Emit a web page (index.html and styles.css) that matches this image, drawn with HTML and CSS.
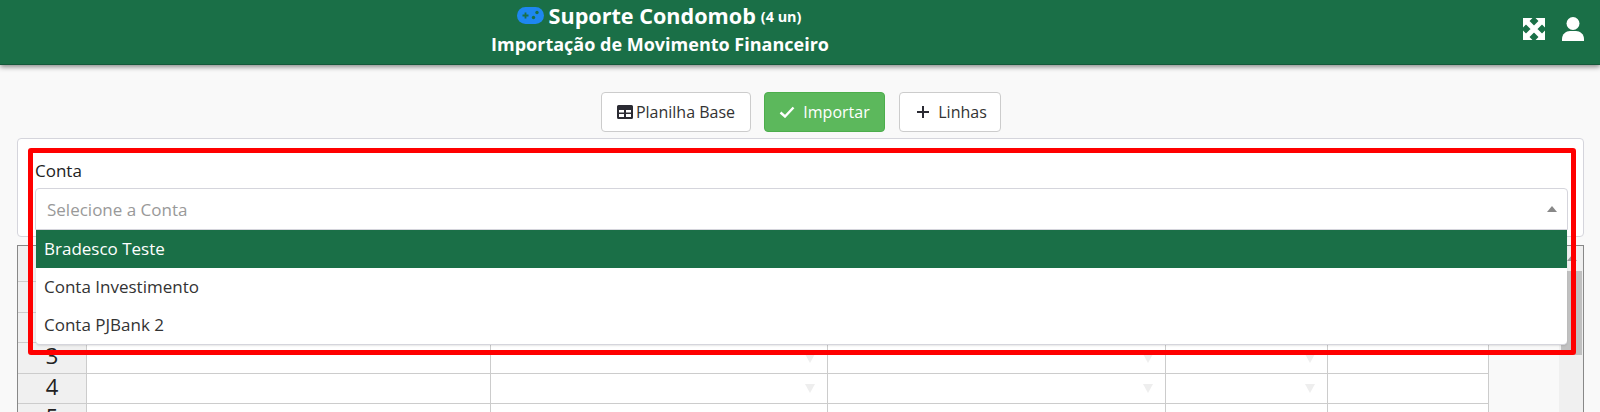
FILE: index.html
```html
<!DOCTYPE html>
<html lang="pt-BR">
<head>
    <meta charset="UTF-8">
    <title>Importação de Movimento Financeiro</title>
    <link rel="stylesheet" href="styles.css">
</head>
<body>
    <div class="header">
        <div class="header-title">
            <div class="title-line">
                <svg class="icon-gamepad" viewBox="0 0 27 17">
                    <rect width="27" height="17" rx="8.500" fill="#1e87f0"/>
                    <path d="M5.500 8.500h6M8.500 5.500v6" stroke="#1a6f47" stroke-width="1.800"/>
                    <circle cx="20" cy="5.500" r="1.700" fill="#1a6f47"/>
                    <circle cx="16.500" cy="10.500" r="1.700" fill="#1a6f47"/>
                </svg>
                <span class="title-main">Suporte Condomob</span>
                <span class="title-count">(4 un)</span>
            </div>
            <div class="subtitle">Importação de Movimento Financeiro</div>
        </div>
        <div class="header-icons">
            <svg class="icon-expand" viewBox="0 0 22 22">
                <path fill="#fff" d="M0 0h9.500L0 9.500zM22 0v9.500L12.500 0zM22 22h-9.500L22 12.500zM0 22v-9.500L9.500 22z"/>
                <path d="M3 3l16 16M19 3L3 19" stroke="#fff" stroke-width="5"/>
            </svg>
            <svg class="icon-user" viewBox="0 0 22 24">
                <circle cx="11" cy="6.500" r="6.500" fill="#fff"/>
                <path fill="#fff" d="M0 24v-2c0-5 4-8 8-8h6c4 0 8 3 8 8v2z"/>
            </svg>
        </div>
    </div>

    <div class="toolbar">
        <button class="btn btn-base">
            <svg class="icon-table" viewBox="0 0 16 14">
                <path fill="#2b2b33" d="M1.500 0h13A1.500 1.500 0 0 1 16 1.500v11a1.500 1.500 0 0 1-1.500 1.500h-13A1.500 1.500 0 0 1 0 12.500v-11A1.500 1.500 0 0 1 1.500 0zM2 5v2.500h5V5zm7 0v2.500h5V5zM2 9v3h5V9zm7 0v3h5V9z"/>
            </svg>Planilha Base
        </button>
        <button class="btn btn-import">
            <svg class="icon-check" viewBox="0 0 16 12">
                <path d="M1.500 6.500l4.500 4 8.500-9" fill="none" stroke="#fff" stroke-width="2.400"/>
            </svg>Importar
        </button>
        <button class="btn btn-lines">
            <svg class="icon-plus" viewBox="0 0 14 14">
                <path d="M7 1v12M1 7h12" stroke="#2b2b33" stroke-width="2"/>
            </svg>Linhas
        </button>
    </div>

    <div class="panel">
        <label class="field-label">Conta</label>
        <div class="select">
            <div class="select-box">
                <span class="select-placeholder">Selecione a Conta</span>
                <span class="select-arrow"></span>
            </div>
            <ul class="select-options">
                <li class="option option-active">Bradesco Teste</li>
                <li class="option">Conta Investimento</li>
                <li class="option">Conta PJBank 2</li>
            </ul>
        </div>
    </div>

    <div class="sheet">
        <div class="sheet-grid">
            <div class="sheet-row sheet-row-head">
                <div class="cell cell-num"></div><div class="cell"></div><div class="cell"></div><div class="cell"></div><div class="cell"></div><div class="cell"></div>
            </div>
            <!-- as linhas 1 e 2 ficam embaixo da lista aberta -->
            <div class="sheet-row">
                <div class="cell cell-num"></div><div class="cell"></div><div class="cell cell-drop"></div><div class="cell cell-drop"></div><div class="cell cell-drop"></div><div class="cell"></div>
            </div>
            <div class="sheet-row">
                <div class="cell cell-num"></div><div class="cell"></div><div class="cell cell-drop"></div><div class="cell cell-drop"></div><div class="cell cell-drop"></div><div class="cell"></div>
            </div>
            <div class="sheet-row">
                <div class="cell cell-num">3</div><div class="cell"></div><div class="cell cell-drop"></div><div class="cell cell-drop"></div><div class="cell cell-drop"></div><div class="cell"></div>
            </div>
            <div class="sheet-row">
                <div class="cell cell-num">4</div><div class="cell"></div><div class="cell cell-drop"></div><div class="cell cell-drop"></div><div class="cell cell-drop"></div><div class="cell"></div>
            </div>
            <div class="sheet-row">
                <div class="cell cell-num">5</div><div class="cell"></div><div class="cell cell-drop"></div><div class="cell cell-drop"></div><div class="cell cell-drop"></div><div class="cell"></div>
            </div>
        </div>
        <div class="sheet-scroll">
            <span class="scroll-up"></span>
            <div class="scroll-thumb"></div>
        </div>
    </div>

    <!-- destaque vermelho por cima do campo -->
    <div class="highlight"></div>
</body>
</html>
```

FILE: styles.css
```css
* {
    box-sizing: border-box;
}

html, body {
    height: 412px;
    overflow: hidden;
}

body {
    margin: 0;
    position: relative;
    font-family: 'Open Sans', sans-serif;
    font-size: 16px;
    color: #333;
    background-color: #f9f9f9;
}

.header {
    height: 65px;
    display: flex;
    justify-content: center;
    position: relative;
    background-color: #1a6f47;
    border-bottom: 1px solid #14583a;
    box-shadow: 0 2px 5px rgba(0, 0, 0, 0.45);
    color: white;
}

.header-title {
    flex: 1;
    padding: 1px 280px 0 0;
    text-align: center;
}

.title-line {
    height: 28px;
    display: flex;
    justify-content: center;
    align-items: center;
    gap: 5px;
    padding-right: 2px;
}

.icon-gamepad {
    width: 27px;
    height: 17px;
}

.title-main {
    font-size: 21.600px;
    font-weight: 700;
}

.title-count {
    font-size: 14.400px;
    font-weight: 700;
    margin-top: 3px;
}

.subtitle {
    margin-top: 1px;
    font-size: 18px;
    font-weight: 700;
    line-height: 28px;
}

.header-icons {
    position: absolute;
    top: 17px;
    right: 16px;
    display: flex;
    align-items: center;
    gap: 17px;
}

.icon-expand {
    width: 22px;
    height: 22px;
}

.icon-user {
    width: 22px;
    height: 24px;
}

.toolbar {
    display: flex;
    justify-content: center;
    gap: 13px;
    padding: 27px 0 6px 2px;
}

.btn {
    height: 40px;
    display: flex;
    align-items: center;
    justify-content: center;
    border: 1px solid #ccc;
    border-radius: 4px;
    background-color: white;
    color: #333;
    font-family: inherit;
    font-size: 16px;
}

.btn-base {
    width: 150px;
}

.btn-import {
    width: 121px;
    gap: 8px;
    margin-right: 1px;
    background-color: #5cb85c;
    border-color: #4cae4c;
    color: white;
}

.btn-lines {
    width: 102px;
    gap: 8px;
    padding-left: 9px;
}

.icon-table {
    width: 16px;
    height: 14px;
    margin-right: 3px;
}

.icon-check {
    width: 16px;
    height: 12px;
}

.icon-plus {
    width: 14px;
    height: 14px;
}

.panel {
    height: 99px;
    margin: 0 16px 0 17px;
    padding: 20px 15px 0 17px;
    background-color: white;
    border: 1px solid #d5d5dc;
    border-radius: 4px;
    font-size: 17px;
}

.field-label {
    display: block;
    height: 29px;
    line-height: 24px;
    color: #222;
}

.select {
    position: relative;
}

.select-box {
    height: 42px;
    display: flex;
    align-items: center;
    justify-content: space-between;
    padding: 0 10px 0 11px;
    background-color: white;
    border: 1px solid #d5d5dc;
    border-radius: 4px 4px 0 0;
}

.select-placeholder {
    color: #999;
}

.select-arrow {
    width: 0;
    height: 0;
    border-left: 5px solid transparent;
    border-right: 5px solid transparent;
    border-bottom: 6px solid #888;
}

.select-options {
    position: absolute;
    top: 42px;
    left: 1px;
    right: 1px;
    z-index: 5;
    margin: 0;
    padding: 0;
    list-style: none;
    background-color: white;
    border-bottom: 1px solid #d5d5dc;
    border-radius: 0 0 4px 4px;
    box-shadow: 0 1px 2px rgba(0, 0, 0, 0.1);
}

.option {
    height: 38px;
    padding-left: 8px;
    line-height: 38px;
}

.option-active {
    background-color: #1a6f47;
    color: white;
}

.sheet {
    height: 200px;
    display: flex;
    margin: 8px 16px 0 17px;
    border: 1px solid #888;
    border-bottom: none;
    background-color: #f9f9f9;
}

.sheet-grid {
    width: 1471px;
}

.sheet-row {
    height: 30.500px;
    display: grid;
    grid-template-columns: 69px 404px 337px 338px 162px 161px;
}

.sheet-row-head {
    height: 36px;
}

.cell {
    position: relative;
    overflow: hidden;
    background-color: white;
    border-right: 1px solid #ccc;
    border-bottom: 1px solid #ccc;
}

.cell-num {
    background-color: #f0f0f0;
    color: #222;
    font-size: 22px;
    line-height: 24px;
    text-align: center;
}

.cell-drop::after {
    content: "";
    position: absolute;
    top: 10.500px;
    right: 12px;
    border-left: 5px solid transparent;
    border-right: 5px solid transparent;
    border-top: 9px solid #eee;
}

.sheet-scroll {
    position: relative;
    flex: 1;
    margin-left: 70px;
    background-color: #f0f0f0;
}

.scroll-up {
    position: absolute;
    top: 9px;
    left: 8px;
    border-left: 5px solid transparent;
    border-right: 5px solid transparent;
    border-bottom: 6px solid #999;
}

.scroll-thumb {
    height: 84px;
    margin: 25px 1px 0 2px;
    background-color: #c1c1c1;
}

.highlight {
    position: absolute;
    top: 148px;
    left: 28px;
    width: 1548px;
    height: 207px;
    z-index: 10;
    border: 5px solid #f00;
    border-radius: 3px;
}
```
